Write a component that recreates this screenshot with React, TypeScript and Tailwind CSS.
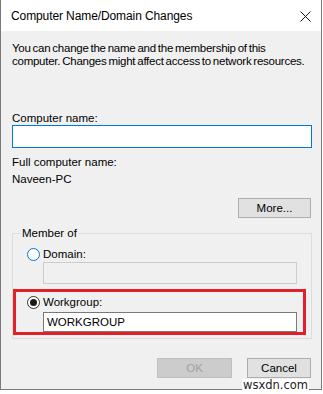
import React from "react";

const font = { fontFamily: '"Liberation Sans", Arial, sans-serif' };

function Radio({ checked, blue }: { checked?: boolean; blue?: boolean }) {
  return (
    <span
      className={
        "flex h-[13px] w-[13px] shrink-0 items-center justify-center rounded-full border bg-white " +
        (blue ? "border-[#0078d7]" : "border-[#333333]")
      }
    >
      {checked && <span className="block h-[7px] w-[7px] rounded-full bg-[#1a1a1a]" />}
    </span>
  );
}

export default function App() {
  return (
    <div className="relative h-[394px] w-[323px] overflow-hidden bg-white text-[11.5px] leading-[14px] text-black" style={font}>
      <div className="flex h-[390px] w-[322px] flex-col border-x border-b border-[#7a7a7a] bg-[#f0f0f0]">
        {/* Title bar */}
        <div className="flex h-[31px] shrink-0 items-center justify-between bg-white pl-[10px] pr-[10px]">
          <span className="whitespace-nowrap text-[12px] leading-[14px] tracking-[-0.1px]">Computer Name/Domain Changes</span>
          <svg width="11" height="11" viewBox="0 0 11 11" className="mt-[1px]">
            <path d="M0.5 0.5 L10.5 10.5 M10.5 0.5 L0.5 10.5" stroke="#111" strokeWidth="1" fill="none" />
          </svg>
        </div>
        {/* Body */}
        <div className="flex flex-col pl-[11px] pt-[11px]">
          <p className="whitespace-nowrap leading-[13px] tracking-[-0.25px] [word-spacing:-1px]">
            You can change the name and the membership of this
            <br />
            computer. Changes might affect access to network resources.
          </p>
          <div className="mt-[43px]">Computer name:</div>
          <div className="h-[23px] w-[300px] border border-[#0078d7] bg-white" />
          <div className="mt-[7px]">Full computer name:</div>
          <div className="mt-[3px]">Naveen-PC</div>
          <div className="mt-[12px] flex w-[300px] justify-end pr-[1px]">
            <button className="h-[20px] w-[73px] border border-[#adadad] bg-[#e1e1e1] text-[11.5px] leading-[14px]">
              More...
            </button>
          </div>
          {/* Group box */}
          <div className="relative mt-[15px] flex h-[106px] w-[300px] flex-col border border-[#dcdcdc] pt-[13px]">
            <span className="absolute left-[7px] top-[-8px] bg-[#f0f0f0] px-[2px]">Member of</span>
            <div className="flex h-[14px] items-center gap-[3px] pl-[14px]">
              <Radio blue />
              <span>Domain:</span>
            </div>
            <div className="ml-[30px] mt-[1px] h-[22px] w-[254px] border border-[#cccccc] bg-[#f0f0f0]" />
            <div className="mt-[5px] flex h-[46px] w-[293px] flex-col border-[3px] border-[#e0202a] pt-[3px]">
              <div className="flex h-[14px] items-center gap-[3px] pl-[11px]">
                <Radio checked />
                <span>Workgroup:</span>
              </div>
              <div className="ml-[27px] mt-[3px] flex h-[22px] w-[254px] items-center border border-[#7a7a7a] bg-white pl-[3px]">
                WORKGROUP
              </div>
            </div>
          </div>
          <div className="mt-[19px] flex w-[300px] justify-end gap-[15px] pr-[1px]">
            <button className="h-[20px] w-[75px] border border-[#bfbfbf] bg-[#cccccc] text-[11.5px] leading-[14px] text-[#a0a0a0]">
              OK
            </button>
            <button className="h-[20px] w-[64px] border border-[#adadad] bg-[#e1e1e1] text-[11.5px] leading-[14px]">
              Cancel
            </button>
          </div>
        </div>
      </div>
      <span className="absolute right-[14px] top-[379px] bg-white px-[1px] text-[11.5px] leading-[12px] text-[#222]" style={{ fontFamily: '"DejaVu Sans", sans-serif' }}>
        wsxdn.com
      </span>
    </div>
  );
}
